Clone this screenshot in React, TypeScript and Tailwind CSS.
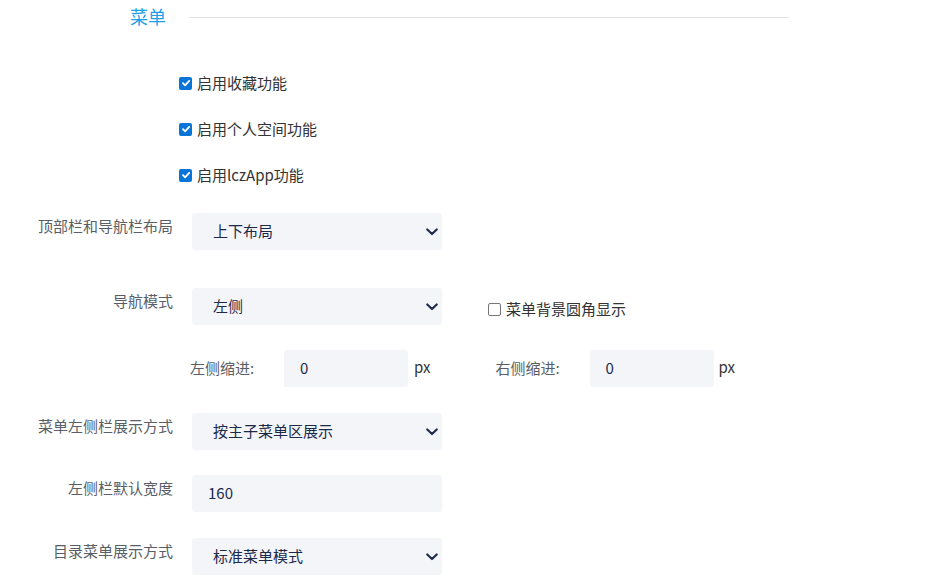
import { useState } from 'react';

const font = { fontFamily: '"Microsoft YaHei", "Noto Sans CJK SC", "Noto Sans", sans-serif' };

const Chevron = () => (
  <svg width="12" height="8" viewBox="0 0 12 8" className="shrink-0">
    <path d="M1.3 1.5 6 6l4.7-4.5" fill="none" stroke="#1f2d4d" strokeWidth="2.2" strokeLinecap="round" strokeLinejoin="round" />
  </svg>
);

const Check = ({ checked, onChange }: { checked: boolean; onChange: () => void }) => (
  <button
    onClick={onChange}
    className={
      'w-[13px] h-[13px] rounded-[2px] flex items-center justify-center shrink-0 ' +
      (checked ? 'bg-[#0a75d8]' : 'bg-white border border-[#767676]')
    }
  >
    {checked && (
      <svg width="10" height="10" viewBox="0 0 10 10">
        <path d="M2 5.2 4.1 7.3 8.2 2.8" fill="none" stroke="#fff" strokeWidth="1.8" strokeLinecap="round" strokeLinejoin="round" />
      </svg>
    )}
  </button>
);

const Select = ({ value }: { value: string }) => (
  <div className="w-[250px] h-[37px] rounded-[3px] bg-[#f3f5f9] flex items-center justify-between pl-[21px] pr-[4px] text-[15px] text-[#1c2a4a]">
    <span>{value}</span>
    <Chevron />
  </div>
);

const Row = ({ label, children, className = '' }: { label: string; children: React.ReactNode; className?: string }) => (
  <div className={'flex items-start ' + className}>
    <div className="w-[173px] text-right text-[15px] text-[#5a5e66] pt-[3px] leading-5">{label}</div>
    <div className="ml-[19px]">{children}</div>
  </div>
);

export default function App() {
  const [fav, setFav] = useState(true);
  const [space, setSpace] = useState(true);
  const [app, setApp] = useState(true);
  const [round, setRound] = useState(false);

  const checks = [
    { label: '启用收藏功能', v: fav, set: () => setFav(!fav) },
    { label: '启用个人空间功能', v: space, set: () => setSpace(!space) },
    { label: '启用lczApp功能', v: app, set: () => setApp(!app) },
  ];

  return (
    <div className="w-[935px] h-[588px] bg-white overflow-hidden" style={font}>
      {/* 标题 */}
      <div className="flex items-center pt-[4px] h-[28px]">
        <span className="ml-[130px] text-[18px] text-[#1e9fe8] leading-6">菜单</span>
        <div className="ml-[23px] w-[600px] h-px bg-[#e2e2e2] mt-[2px]" />
      </div>

      <div className="flex flex-col gap-[26px] pl-[179px] mt-[45px]">
        {checks.map(c => (
          <label key={c.label} className="flex items-center text-[15px] text-[#333] leading-5 cursor-pointer">
            <Check checked={c.v} onChange={c.set} />
            <span className="ml-[5px]">{c.label}</span>
          </label>
        ))}
      </div>

      <Row label="顶部栏和导航栏布局" className="mt-[28px]">
        <Select value="上下布局" />
      </Row>

      <Row label="导航模式" className="mt-[38px]">
        <div className="flex items-center">
          <Select value="左侧" />
          <label className="ml-[46px] mt-[5px] flex items-center text-[15px] text-[#333] leading-5 cursor-pointer">
            <Check checked={round} onChange={() => setRound(!round)} />
            <span className="ml-[5px]">菜单背景圆角显示</span>
          </label>
        </div>
      </Row>

      <div className="flex items-center mt-[25px] text-[15px]">
        <span className="ml-[190px] w-[94px] text-[#5a5e66]">左侧缩进:</span>
        <div className="w-[124px] h-[37px] rounded-[3px] bg-[#f3f5f9] flex items-center pl-[16px] text-[#1c2a4a]">0</div>
        <span className="ml-[6px] text-[#333] -mt-[2px]">px</span>
        <span className="ml-[65px] w-[94px] text-[#5a5e66]">右侧缩进:</span>
        <div className="w-[124px] h-[37px] rounded-[3px] bg-[#f3f5f9] flex items-center pl-[16px] text-[#1c2a4a]">0</div>
        <span className="ml-[5px] text-[#333] -mt-[2px]">px</span>
      </div>

      <Row label="菜单左侧栏展示方式" className="mt-[26px]">
        <Select value="按主子菜单区展示" />
      </Row>

      <Row label="左侧栏默认宽度" className="mt-[25px]">
        <div className="w-[250px] h-[37px] rounded-[3px] bg-[#f3f5f9] flex items-center pl-[16px] text-[15px] text-[#1c2a4a]">160</div>
      </Row>

      <Row label="目录菜单展示方式" className="mt-[26px]">
        <Select value="标准菜单模式" />
      </Row>
    </div>
  );
}
